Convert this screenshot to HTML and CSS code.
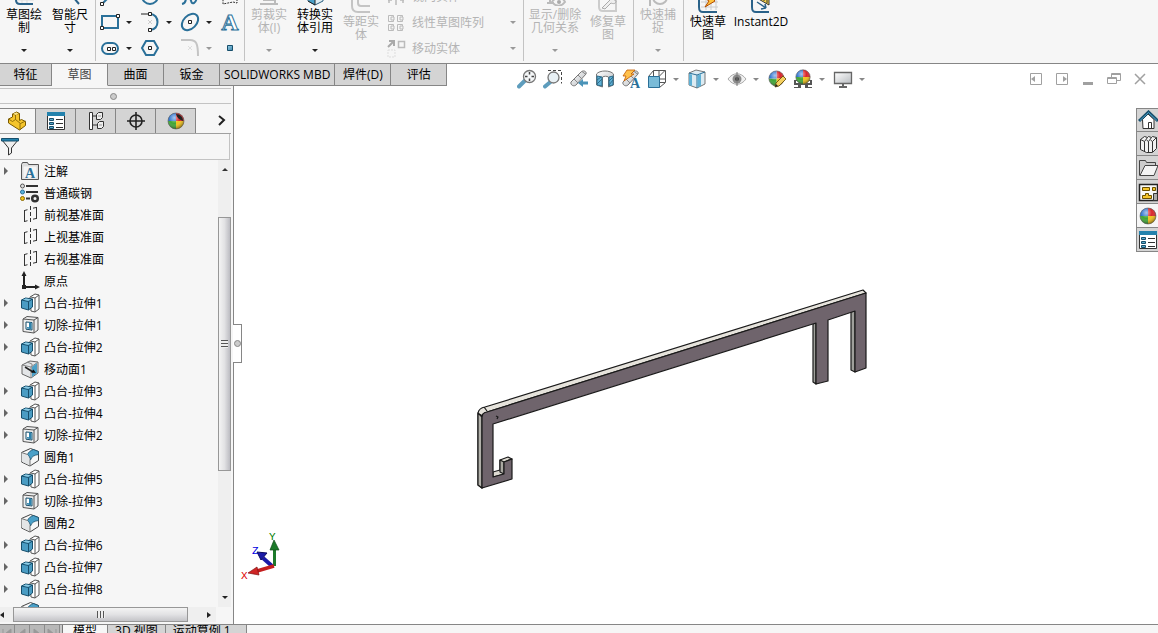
FILE: index.html
```html
<!DOCTYPE html>
<html lang="zh-CN">
<head>
  <meta charset="UTF-8">
  <meta name="viewport" content="width=device-width, initial-scale=1.0">
  <title>SOLIDWORKS</title>
  <link rel="stylesheet" href="styles.css">
</head>
<body>
  <!-- Icon sprite -->
  <svg class="sprite" aria-hidden="true">
    <defs>
      <linearGradient id="gray" x1="0" y1="0" x2="1" y2="1"><stop offset="0" stop-color="#fff"/><stop offset="1" stop-color="#b8bcc0"/></linearGradient>
      <linearGradient id="blue" x1="0" y1="0" x2="1" y2="1"><stop offset="0" stop-color="#9bd0e6"/><stop offset="1" stop-color="#3b86ad"/></linearGradient>
      <radialGradient id="shine" cx=".4" cy=".3" r=".7"><stop offset="0" stop-color="#fff" stop-opacity=".6"/><stop offset=".5" stop-color="#fff" stop-opacity="0"/><stop offset="1" stop-color="#000" stop-opacity=".4"/></radialGradient>
    </defs>
    <symbol id="ball" viewBox="0 0 20 20">
      <path d="M10 10V2a8 8 0 0 1 8 8z" fill="#d9262b"/><path d="M10 10h8a8 8 0 0 1-8 8z" fill="#f2c21b"/><path d="M10 10v8a8 8 0 0 1-8-8z" fill="#3fa535"/><path d="M10 10H2a8 8 0 0 1 8-8z" fill="#2f74d0"/>
      <circle cx="10" cy="10" r="8" fill="url(#shine)" stroke="#555" stroke-width=".6"/>
    </symbol>
    <symbol id="boss" viewBox="0 0 20 20">
      <path d="M10 4l5-3 4 1v14l-4 3-4-1z" fill="#fff" stroke="#555"/><path d="M15 5l4-3M15 5v14M11 4l4 1" fill="none" stroke="#555"/>
      <path d="M1.500 7l4-2 7 1v8l-4 3-7-2z" fill="#4a9cc3" stroke="#174e6b"/><path d="M1.500 7l7 1.500 4-2.500M8.500 8.500V17" fill="none" stroke="#174e6b"/><path d="M3 6.800l3-1.200 5 .800-3 1.300z" fill="#8ccbe4"/>
    </symbol>
    <symbol id="cut" viewBox="0 0 20 20">
      <path d="M3 4l4-2.500 11 1V15l-4 3-11-1.500z" fill="#eee" stroke="#555"/><path d="M3 4l11 1 4-2.500M14 5v13" fill="none" stroke="#555"/>
      <path d="M6 7l6 .500v7.500l-6-.800z" fill="#fff" stroke="#174e6b"/><path d="M9 7.500l2.500.200v6.500L7 13.500V12l2 .200z" fill="#2d83ad"/>
    </symbol>
    <symbol id="moveface" viewBox="0 0 20 20">
      <path d="M2 6l8-4 8 1v11l-7 5-9-4z" fill="#e4e6e8" stroke="#666"/><path d="M2 6l9 2 7-5M11 8v11M7 3l5 2v8" fill="none" stroke="#888"/><path d="M12 8l5-4v10l-5 4z" fill="#4aa0c8"/><path d="M5 8l8 5" stroke="#222" stroke-width="1.500"/><path d="M16 14l-5-.500 2.500-3z" fill="#111"/>
    </symbol>
    <symbol id="fillet" viewBox="0 0 20 20">
      <path d="M1.500 5.500l9-4 8 3v9l-8.500 5.500-8.500-4z" fill="#f6f7f7" stroke="#444"/>
      <path d="M10 18.500v-6c0-2-1-4-2.500-5l-6-2v9z" fill="#e3e5e6"/>
      <path d="M7.500 7.500c1-2.500 3-4 6-5l5 2v3c-4 .500-7 2-8 5.500-.500-2.500-1.500-4.500-3-5.500z" fill="#4aa0c8" stroke="#174e6b" stroke-width=".8"/>
      <path d="M1.500 5.500l6 2M10 12.500V19" fill="none" stroke="#777"/>
    </symbol>
    <symbol id="plane" viewBox="0 0 20 20">
      <path d="M4.500 5v12M16.500 2v12M4.500 5.500l3-.800M13 3.200l3.500-.800M4.500 16.500l3-.800M13 14.200l3.500-.800" fill="none" stroke="#333"/><path d="M10.500 1v18" stroke="#333" stroke-dasharray="4 2"/>
    </symbol>
    <symbol id="notes" viewBox="0 0 20 20">
      <path d="M1.500 18.500v-15l1-2h5l1 2h10v15z" fill="#ddd" stroke="#555"/><path d="M3.500 5.500h13v12h-13z" fill="#f4f4f4"/>
      <text x="10" y="17" class="glyph-a">A</text>
    </symbol>
    <symbol id="material" viewBox="0 0 20 20">
      <circle cx="2.500" cy="3" r="2" fill="#ddd" stroke="#555"/><circle cx="2.500" cy="9" r="2" fill="#59b3d9" stroke="#2a6f97"/><circle cx="2.500" cy="15.500" r="2" fill="#f2c21b" stroke="#8a6a00"/>
      <path d="M6 3h12M6 9h12M6 15.500h4" stroke="#333" stroke-width="2"/><circle cx="15" cy="15.500" r="2.800" fill="none" stroke="#333" stroke-width="2.500"/>
    </symbol>
    <symbol id="origin" viewBox="0 0 20 20">
      <path d="M4 3v13h13" fill="none" stroke="#222" stroke-width="2"/><path d="M4 0l2.500 5h-5zM20 16l-5-2.500v5z" fill="#222"/><path d="M2 14h4v4H2z" fill="#222"/>
    </symbol>
    <symbol id="part" viewBox="0 0 20 20">
      <path d="M1.500 8l4-2V3l4-2 3 1.500v7l2-1 4 2v4l-6 4.500-11-7z" fill="#f5c52c" stroke="#7a5a00"/><path d="M1.500 8l4 2.500 3-2V3.500l4-1M5.500 3l3 1M8.500 8.500l5 4 5-2.500M13 12.500V19" fill="none" stroke="#7a5a00" stroke-width=".8"/><path d="M6 3l3-1.500 2.500 1L9 4z" fill="#fde68a"/>
    </symbol>
    <symbol id="props" viewBox="0 0 20 20">
      <path d="M1.500 2.500h17v16h-17z" fill="#fff" stroke="#333"/><path d="M1 1h18v4H1z" fill="#2382ad"/><path d="M3.500 7.500h4v2h-4zM3.500 11.500h4v2h-4zM3.500 15.500h4v2h-4z" fill="#5aa9cc" stroke="#174e6b"/><path d="M10 8.500h7M10 12.500h7M10 16.500h7" stroke="#333"/>
    </symbol>
    <symbol id="config" viewBox="0 0 20 20">
      <path d="M3.500 1.500h3v17h-3zM7 5h4M7 14h4" fill="#fff" stroke="#333"/><path d="M10.500 3.500l2-2h4v5l-2 2h-4zM11.500 12.500l2-2h4v5l-2 2h-4z" fill="#eee" stroke="#333"/><path d="M12 5h3M13 14h3" stroke="#999"/>
    </symbol>
    <symbol id="target" viewBox="0 0 20 20"><circle cx="10" cy="10" r="6" fill="none" stroke="#222" stroke-width="1.600"/><path d="M10 1v18M1 10h18" stroke="#222" stroke-width="1.600"/></symbol>
    <symbol id="funnel" viewBox="0 0 20 20">
      <path d="M2 3l6.500 8v7l3-2v-5L18 3z" fill="#eee" stroke="#333"/><path d="M1.500 1.500h17v2.500h-17z" fill="#2382ad" stroke="#174e6b"/>
    </symbol>
    <symbol id="scope" viewBox="0 0 20 20">
      <path d="M2 13l10-10c2-2 6-1 5 2L7 16c-2 2-6 0-5-3z" fill="url(#gray)" stroke="#777"/><path d="M9 6l4 4M5 10l4 4M13 2.500l4 3" fill="none" stroke="#888"/>
    </symbol>
    <symbol id="zoomfit" viewBox="0 0 20 20">
      <path d="M2 17.500l6-6" stroke="#5e9dbd" stroke-width="4" stroke-linecap="round"/><circle cx="12.500" cy="7.500" r="6" fill="#f5f7f8" stroke="#777" stroke-width="1.300"/><path d="M12.500 3v2.500M12.500 9.500V12M8 7.500h2.500M14.500 7.500H17" stroke="#444" stroke-width="1.500"/>
    </symbol>
    <symbol id="zoomarea" viewBox="0 0 20 20">
      <path d="M2 17.500l6-5" stroke="#5e9dbd" stroke-width="4" stroke-linecap="round"/><circle cx="10.500" cy="8.500" r="5.500" fill="#e8f0f4" stroke="#777" stroke-width="1.300"/><path d="M5 1.500h13.500v13" fill="none" stroke="#444" stroke-dasharray="3 2"/>
    </symbol>
    <symbol id="section" viewBox="0 0 20 20">
      <path d="M1.500 5c3-4 14-4 17 0v11l-5 2V8c-2-1-4-1-6 0v10l-6-2z" fill="url(#gray)" stroke="#777"/><path d="M2 7l5 1v9l-5-1zM14 8l4-1v9l-4 1z" fill="#5fb0d4" stroke="#2f6d8c"/><path d="M2 11l4-3M2 15l5-5M14 12l4-4M14 16l4-5" stroke="#2f6d8c"/>
    </symbol>
    <symbol id="cubeview" viewBox="0 0 20 20">
      <path d="M1.500 7.500l5-6h12v12l-6 5M12 7.500l6-6M6.500 1.500v6M12 13.500h6M12 1v6M13 10h5" fill="none" stroke="#555"/><path d="M1.500 7.500h11v11h-11z" fill="#79bbd8" stroke="#2a6f97"/>
    </symbol>
    <symbol id="shaded" viewBox="0 0 20 20">
      <path d="M2 4l7-3 9 2v12l-8 4-8-3z" fill="#dcebf2" stroke="#777"/><path d="M2 4l8 2 8-3M10 6v13" fill="none" stroke="#2a6f97"/><path d="M2 5l3 .500V17l-3-1zM10.500 6.500L14 5v12l-3.500 1.500z" fill="#5fb0d4"/>
    </symbol>
    <symbol id="eye" viewBox="0 0 20 20">
      <path d="M1 10c5-7 13-7 18 0-5 7-13 7-18 0z" fill="#f1f1f1" stroke="#aaa"/><circle cx="10" cy="10" r="4.500" fill="#8c8c8c"/><circle cx="10" cy="10" r="2" fill="#444"/><path d="M10 3v14" stroke="#777"/>
    </symbol>
    <symbol id="monitor" viewBox="0 0 20 20"><path d="M1.500 3.500h17v11h-17z" fill="url(#gray)" stroke="#666" stroke-width="1.300"/><path d="M9 15h2v2h3v2H6v-2h3z" fill="#666"/></symbol>
    <symbol id="rect" viewBox="0 0 20 20"><path d="M2 4h16v12H2z" fill="none" stroke="#2a7099" stroke-width="2"/><path d="M.5 14.500h3v3h-3zM16.500 2.500h3v3h-3z" fill="#fff" stroke="#222"/></symbol>
    <symbol id="arc" viewBox="0 0 20 20"><path d="M10 2c10 0 10 16 0 16" fill="none" stroke="#2a7099" stroke-width="2"/><path d="M1 2h8" stroke="#222"/><path d="M8.500.5h3v3h-3zM8.500 16.500h3v3h-3z" fill="#fff" stroke="#222"/><path d="M8 8l4 4M12 8l-4 4" stroke="#ccc"/></symbol>
    <symbol id="ellipse" viewBox="0 0 20 20"><ellipse cx="10" cy="10" rx="9.500" ry="6.500" transform="rotate(-45 10 10)" fill="none" stroke="#2a7099" stroke-width="2"/><path d="M8.500 8.500h3v3h-3z" fill="#fff" stroke="#222"/></symbol>
    <symbol id="lettera" viewBox="0 0 20 20"><text x="10" y="18" class="outline-a">A</text></symbol>
    <symbol id="slot" viewBox="0 0 20 20"><rect x="2" y="5" width="16" height="11" rx="5.500" fill="none" stroke="#2a7099" stroke-width="2"/><path d="M7.500 9.500h3v3h-3zM12.500 9.500h3v3h-3z" fill="#fff" stroke="#222"/></symbol>
    <symbol id="hex" viewBox="0 0 20 20"><path d="M6 3h8l4 7-4 7H6l-4-7z" fill="none" stroke="#2a7099" stroke-width="2"/><path d="M8.500 8.500h3v3h-3z" fill="#fff" stroke="#222"/></symbol>
    <symbol id="corner" viewBox="0 0 20 20"><path d="M1 2h9c6 0 8 3 8 16" fill="none" stroke="#c4c4c4" stroke-width="2"/><path d="M8 8l4 4M12 8l-4 4" stroke="#ddd"/></symbol>
    <symbol id="point" viewBox="0 0 20 20"><path d="M7.500 7.500h5v5h-5z" fill="url(#blue)" stroke="#174e6b"/></symbol>
    <symbol id="line" viewBox="0 0 20 20"><path d="M3 17L19 1" stroke="#2a7099" stroke-width="2"/><path d="M.5 16.500h3v3h-3z" fill="#fff" stroke="#222"/></symbol>
    <symbol id="circle" viewBox="0 0 20 20"><circle cx="10" cy="10" r="8" fill="none" stroke="#2a7099" stroke-width="2"/></symbol>
    <symbol id="spline" viewBox="0 0 20 20"><path d="M2 18c6-1 2-7 6-7s2 8 6 6 2-8 4-12" fill="none" stroke="#2a7099" stroke-width="2"/></symbol>
    <symbol id="lasso" viewBox="0 0 20 20"><path d="M3 3h14v14l-4-1-10 2z" fill="none" stroke="#333" stroke-dasharray="2 1"/></symbol>
    <symbol id="sketch" viewBox="0 0 24 24"><path d="M10 1v20M15 1v20M5 13h17M5 18h17" stroke="#ddd"/><path d="M4 0v18c0 3 1 4 4 4h13" fill="none" stroke="#2a6289" stroke-width="2"/></symbol>
    <symbol id="dimension" viewBox="0 0 24 24"><path d="M4 2l17 20" stroke="#2a6289" stroke-width="2"/></symbol>
    <symbol id="trim" viewBox="0 0 24 24"><path d="M7 2v14h4V2M15 8v8h6M3 22h18M6 18h12v4" fill="none" stroke="#bbb" stroke-width="2"/></symbol>
    <symbol id="convert" viewBox="0 0 24 24"><path d="M5 10h15v9l-8 4-7-4z" fill="#e0edf3" stroke="#2a5f80"/><path d="M5 19l7 4V13" fill="#4aa0c8" stroke="#222"/></symbol>
    <symbol id="offset" viewBox="0 0 24 24"><path d="M3 0v17c0 4 2 6 6 6h12M9 0v14c0 2 1 3 3 3h9" fill="none" stroke="#c4c4c4" stroke-width="2"/></symbol>
    <symbol id="relations" viewBox="0 0 24 24"><path d="M4 21h7M7 12v9M9 20c4-6 10-6 13 0-4 5-9 5-13 0z" fill="none" stroke="#bbb" stroke-width="2"/><circle cx="16" cy="20" r="2" fill="#aaa"/></symbol>
    <symbol id="repair" viewBox="0 0 24 24"><path d="M3 0v18c0 3 1 4 4 4h13V0" fill="none" stroke="#ccc" stroke-width="2"/><path d="M6 19l8-8c0-4 3-5 5-4l-2 3 3 2c0 3-3 3-5 2l-6 6z" fill="#eee" stroke="#aaa"/></symbol>
    <symbol id="snap" viewBox="0 0 24 24"><path d="M4 10v14" stroke="#bbb" stroke-width="2"/><circle cx="14" cy="15" r="7" fill="none" stroke="#bbb" stroke-width="2"/><path d="M14 15l3-4" stroke="#aaa"/></symbol>
    <symbol id="rapid" viewBox="0 0 24 24"><path d="M10 6v15M15 6v15M20 6v15M5 13h17M5 18h17" stroke="#ccc"/><path d="M3 0v18c0 4 1 5 4 5h14" fill="none" stroke="#2a6289" stroke-width="2"/><path d="M14 4l7 3-4 3 2 2-10 6 4-6-3-2z" fill="#ffc33c" stroke="#b34a00"/></symbol>
    <symbol id="instant" viewBox="0 0 24 24"><path d="M3 0v18c0 4 1 5 4 5h13" fill="none" stroke="#2a6289" stroke-width="2"/><path d="M6 8l14 8v-6L6 2z" fill="#f8d54a" stroke="#333"/><path d="M9 6v3M12 8v3M15 9v3M18 11v3" stroke="#333"/><path d="M8 13l9 6m0 0l-1-4m1 4l-5 1" stroke="#2a6289" stroke-width="1.500"/></symbol>
    <symbol id="array" viewBox="0 0 20 20"><path d="M2.500 3.500h5v6h-5zM11.500 3.500h5v6h-5zM2.500 12.500h5v6h-5zM11.500 12.500h5v6h-5z" fill="none" stroke="#bbb"/><path d="M5 5h3v3H5zM14 5h3v3h-3zM5 14h3v3H5zM14 14h3v3h-3z" fill="#f6f6f6" stroke="#bbb"/></symbol>
    <symbol id="mirror" viewBox="0 0 20 20"><path d="M2 14h4M10 2v17M14 14h4M3 12v5M17 12v5" stroke="#bbb" stroke-width="1.500"/></symbol>
    <symbol id="moveent" viewBox="0 0 20 20"><path d="M2 9l5-5M3 3h5v5" fill="none" stroke="#aaa" stroke-width="2"/><path d="M12.500 3.500h6v6h-6z" fill="none" stroke="#bbb" stroke-width="1.500"/><path d="M2 12h7v7H2z" fill="none" stroke="#ddd" stroke-dasharray="2 1"/></symbol>
    <symbol id="home" viewBox="0 0 20 20"><path d="M4.500 9.500L10 4l6 5.500v9h-11z" fill="#fff" stroke="#333"/><path d="M10.500 18.500v-6h3v6" fill="none" stroke="#333"/><path d="M1 11l9.500-9L20 11" fill="none" stroke="#174e6b" stroke-width="3"/><path d="M2 10.500l8.500-8L19 10.500" fill="none" stroke="#4aa0c8"/></symbol>
    <symbol id="library" viewBox="0 0 20 20"><path d="M2.500 5.500l4-3 3 1 1-1 3 1 1-1 4 1v11l-4 4-6 0-6-3z" fill="#f2f2f2" stroke="#333"/><path d="M2.500 5.500l4 2V18M6.500 7.500l3-4M10.500 7.500V18M8.500 6l2 1.500 3-4M14.500 7.500V18M12.500 6l2 1.500 4-4" fill="none" stroke="#333"/></symbol>
    <symbol id="folder" viewBox="0 0 20 20"><path d="M1.500 17.500v-15h6l1 2h9v3" fill="#ccc" stroke="#444"/><path d="M2 17.500l5-10h13l-4 10z" fill="#f4f4f4" stroke="#444"/></symbol>
    <symbol id="palette" viewBox="0 0 20 20"><path d="M1.500 2.500h18v16h-18z" fill="#f8f8f8" stroke="#222" stroke-width="1.500"/><path d="M4.500 5.500h7v3h-7zM14.500 5.500h3v3h-3zM7.500 11.500h3v2h3v3h-9v-3h3z" fill="#f5c52c" stroke="#6b5000"/><path d="M15.500 11.500h4v7h-4z" fill="#aaa" stroke="#333"/></symbol>
  </svg>

  <header class="ribbon">
    <div class="group">
      <button class="tool"><svg><use href="#sketch"/></svg><span>草图绘<br>制</span><i class="caret"></i></button>
      <button class="tool"><svg><use href="#dimension"/></svg><span>智能尺<br>寸</span><i class="caret"></i></button>
    </div>
    <div class="group entities">
      <button aria-label="直线"><svg><use href="#line"/></svg><i class="caret"></i></button>
      <button aria-label="圆"><svg><use href="#circle"/></svg><i class="caret"></i></button>
      <button aria-label="样条曲线"><svg><use href="#spline"/></svg><i class="caret"></i></button>
      <button aria-label="基准面"><svg><use href="#lasso"/></svg></button>
      <button aria-label="矩形"><svg><use href="#rect"/></svg><i class="caret"></i></button>
      <button aria-label="圆弧"><svg><use href="#arc"/></svg><i class="caret"></i></button>
      <button aria-label="椭圆"><svg><use href="#ellipse"/></svg><i class="caret"></i></button>
      <button aria-label="文字"><svg><use href="#lettera"/></svg></button>
      <button aria-label="槽口"><svg><use href="#slot"/></svg><i class="caret"></i></button>
      <button aria-label="多边形"><svg><use href="#hex"/></svg></button>
      <button aria-label="圆角" disabled><svg><use href="#corner"/></svg><i class="caret"></i></button>
      <button aria-label="点"><svg><use href="#point"/></svg></button>
    </div>
    <div class="group">
      <button class="tool" disabled><svg><use href="#trim"/></svg><span>剪裁实<br>体(I)</span><i class="caret"></i></button>
      <button class="tool"><svg><use href="#convert"/></svg><span>转换实<br>体引用</span><i class="caret"></i></button>
      <button class="tool low" disabled><svg><use href="#offset"/></svg><span>等距实<br>体</span></button>
      <div class="rows">
        <button disabled><svg><use href="#mirror"/></svg><span>镜向实体</span></button>
        <button disabled><svg><use href="#array"/></svg><span>线性草图阵列</span><i class="caret"></i></button>
        <button disabled><svg><use href="#moveent"/></svg><span>移动实体</span><i class="caret"></i></button>
      </div>
    </div>
    <div class="group">
      <button class="tool wide" disabled><svg><use href="#relations"/></svg><span>显示/删除<br>几何关系</span><i class="caret"></i></button>
      <button class="tool low" disabled><svg><use href="#repair"/></svg><span>修复草<br>图</span></button>
    </div>
    <div class="group">
      <button class="tool" disabled><svg><use href="#snap"/></svg><span>快速捕<br>捉</span><i class="caret"></i></button>
    </div>
    <div class="group last">
      <button class="tool low"><svg><use href="#rapid"/></svg><span>快速草<br>图</span></button>
      <button class="tool wide low"><svg><use href="#instant"/></svg><span>Instant2D</span></button>
    </div>
  </header>

  <div class="tab-row">
    <nav class="tabs">
      <button>特征</button>
      <button class="active">草图</button>
      <button>曲面</button>
      <button>钣金</button>
      <button>SOLIDWORKS MBD</button>
      <button>焊件(D)</button>
      <button>评估</button>
    </nav>
    <div class="view-tools">
      <button aria-label="整屏显示全图"><svg><use href="#zoomfit"/></svg></button>
      <button aria-label="局部放大"><svg><use href="#zoomarea"/></svg></button>
      <button aria-label="上一视图"><svg viewBox="0 0 20 20"><use href="#scope"/><path d="M9 14l5-4v2.500h5v3h-5V18z" fill="#4a93b8"/></svg></button>
      <button aria-label="剖面视图"><svg><use href="#section"/></svg></button>
      <button aria-label="动态注解视图"><svg viewBox="0 0 20 20"><use href="#scope"/><path d="M6 1h8l-4 4h3L3 12l2-5H2z" fill="#ffc14d" stroke="#c25a00" stroke-width=".8"/><text x="14" y="19" class="glyph-a">A</text></svg></button>
      <button aria-label="视图定向"><svg><use href="#cubeview"/></svg></button>
      <button class="drop" aria-label="更多视图"><i class="caret"></i></button>
      <button aria-label="显示样式"><svg><use href="#shaded"/></svg></button>
      <button class="drop" aria-label="更多样式"><i class="caret"></i></button>
      <button aria-label="隐藏/显示项目"><svg><use href="#eye"/></svg></button>
      <button class="drop" aria-label="更多项目"><i class="caret"></i></button>
      <button aria-label="编辑外观"><svg viewBox="0 0 20 20"><use href="#ball" width="19" height="19"/><path d="M8 18l1-4 7-7 3 3-7 7z" fill="#f5d060" stroke="#5a4300" stroke-width=".8"/><path d="M8 18l1-3 2 2z" fill="#222"/></svg></button>
      <button aria-label="应用布景"><svg viewBox="0 0 20 20"><path d="M1 11h18v8H1z" fill="#555"/><path d="M3 12h3v2H3zM14 12h3v2h-3zM1 16h4v2H1zM8 16h4v3H8zM15 16h4v2h-4z" fill="#fff"/><use href="#ball" x="1" y="-1" width="18" height="18"/></svg></button>
      <button class="drop" aria-label="更多布景"><i class="caret"></i></button>
      <button aria-label="视图设定"><svg><use href="#monitor"/></svg></button>
      <button class="drop" aria-label="更多设定"><i class="caret"></i></button>
    </div>
    <div class="window-tools">
      <button aria-label="左侧窗格"><svg viewBox="0 0 14 14"><path d="M1.500 1.500h11v11h-11z"/><path class="solid" d="M6 4v6L2 7z"/></svg></button>
      <button aria-label="右侧窗格"><svg viewBox="0 0 14 14"><path d="M1.500 1.500h11v11h-11z"/><path class="solid" d="M8 4v6l4-3z"/></svg></button>
      <button aria-label="最小化"><svg viewBox="0 0 14 14"><path class="solid" d="M2 10h10v3H2z"/></svg></button>
      <button aria-label="还原"><svg viewBox="0 0 14 14"><path d="M4.500 5V1.500h9v7H10M.5 5.500h9v6h-9zM4 2.500h9M1 6.500h8"/></svg></button>
      <button aria-label="关闭"><svg viewBox="0 0 14 14"><path d="M2 2l10 10M12 2L2 12" stroke-width="1.500"/></svg></button>
    </div>
  </div>

  <main class="workspace">
    <aside class="panel">
      <div class="grip"><i class="dot"></i></div>
      <nav class="panel-tabs">
        <button class="active" aria-label="设计树"><svg><use href="#part"/></svg></button>
        <button aria-label="属性"><svg><use href="#props"/></svg></button>
        <button aria-label="配置"><svg><use href="#config"/></svg></button>
        <button aria-label="尺寸专家"><svg><use href="#target"/></svg></button>
        <button aria-label="外观"><svg viewBox="0 0 20 20"><use href="#ball"/><path d="M10 3c1 4 4 6 7 7 0-4-3-7-7-7z" fill="#222"/></svg></button>
        <button class="more" aria-label="更多"><svg viewBox="0 0 20 20"><path d="M8 5l5 4-5 5" fill="none" stroke="#222" stroke-width="2"/></svg></button>
      </nav>
      <label class="filter"><svg><use href="#funnel"/></svg><input type="text" aria-label="过滤"></label>
      <div class="tree-area">
        <ul class="tree">
          <li class="parent"><svg><use href="#notes"/></svg>注解</li>
          <li><svg><use href="#material"/></svg>普通碳钢</li>
          <li><svg><use href="#plane"/></svg>前视基准面</li>
          <li><svg><use href="#plane"/></svg>上视基准面</li>
          <li><svg><use href="#plane"/></svg>右视基准面</li>
          <li><svg><use href="#origin"/></svg>原点</li>
          <li class="parent"><svg><use href="#boss"/></svg>凸台-拉伸1</li>
          <li class="parent"><svg><use href="#cut"/></svg>切除-拉伸1</li>
          <li class="parent"><svg><use href="#boss"/></svg>凸台-拉伸2</li>
          <li><svg><use href="#moveface"/></svg>移动面1</li>
          <li class="parent"><svg><use href="#boss"/></svg>凸台-拉伸3</li>
          <li class="parent"><svg><use href="#boss"/></svg>凸台-拉伸4</li>
          <li class="parent"><svg><use href="#cut"/></svg>切除-拉伸2</li>
          <li><svg><use href="#fillet"/></svg>圆角1</li>
          <li class="parent"><svg><use href="#boss"/></svg>凸台-拉伸5</li>
          <li class="parent"><svg><use href="#cut"/></svg>切除-拉伸3</li>
          <li><svg><use href="#fillet"/></svg>圆角2</li>
          <li class="parent"><svg><use href="#boss"/></svg>凸台-拉伸6</li>
          <li class="parent"><svg><use href="#boss"/></svg>凸台-拉伸7</li>
          <li class="parent"><svg><use href="#boss"/></svg>凸台-拉伸8</li>
          <li><svg><use href="#fillet"/></svg></li>
        </ul>
        <div class="scroll-v"><i class="caret up"></i><div class="thumb"></div><i class="caret"></i></div>
      </div>
      <div class="scroll-h"><i class="caret left"></i><div class="thumb"></div><i class="caret right"></i></div>
      <button class="splitter" aria-label="折叠面板"><i class="dot"></i></button>
    </aside>

    <section class="canvas">
      <svg viewBox="234 86 924 538" preserveAspectRatio="xMidYMid meet">
        <!-- part -->
        <g stroke="#1a1a1a" stroke-width="1.200" stroke-linejoin="round">
          <path d="M478 413Q479 408 485 407L863 290L866 293L487 412Q482 413 482 417V488L478 485z" fill="#e6e3dc"/>
          <path d="M478 413V485L482 488V417z" fill="#b2b1aa"/>
          <path d="M813 324V382L816 384V323zM851 312V370L855 372V311z" fill="#9fa09b"/>
          <path d="M493 472L500 470V460L508 457L512 459L504 462V474L493 477z" fill="#dedbd2"/>
          <path d="M500 460L504 462V474L500 472z" fill="#aaa9a2"/>
          <path d="M487 412L866 293V368L855 372V311L828 320V381L816 384V323L493 424V477L504 474V462L512 459V479L482 488V417Q482 413 487 412z" fill="#6f646c"/>
          <path d="M479 414L483 416M484 407L487 411" fill="none"/>
          <path d="M496 416l2 1-1 2" fill="none"/>
        </g>
        <!-- axis triad -->
        <g class="triad">
          <path d="M273 566V550h3v16z" fill="#1c7a2a"/><path d="M270 550l4-10 5 10z" fill="#1c7a2a" stroke="#0f4a18" stroke-width=".7"/>
          <path d="M272 566l-9-8" stroke="#1a1aa8" stroke-width="4"/><path d="M257 552l10 1-6 7z" fill="#1a1aa8" stroke="#0b0b60"/>
          <path d="M274 566l-17 5" stroke="#c41e1e" stroke-width="3.500"/><path d="M248 573l9-6 2 8z" fill="#d02525" stroke="#801010" stroke-width=".7"/>
          <text x="269" y="540" fill="#008000">Y</text>
          <text x="252" y="554" fill="#0000e0">Z</text>
          <text x="241" y="579" fill="#e00000">X</text>
        </g>
      </svg>
      <nav class="task-pane">
        <button aria-label="资源"><svg><use href="#home"/></svg></button>
        <button aria-label="设计库"><svg><use href="#library"/></svg></button>
        <button aria-label="文件探索器"><svg><use href="#folder"/></svg></button>
        <button aria-label="视图调色板"><svg><use href="#palette"/></svg></button>
        <button class="active" aria-label="外观"><svg><use href="#ball"/></svg></button>
        <button aria-label="自定义属性"><svg><use href="#props"/></svg></button>
      </nav>
    </section>
  </main>

  <footer class="sheet-bar">
    <div class="sheet-nav">
      <button aria-label="第一个"><svg viewBox="0 0 14 14"><path d="M3 2v10M11 2v10L5 7z"/></svg></button>
      <button aria-label="上一个"><svg viewBox="0 0 14 14"><path d="M10 2v10L4 7z"/></svg></button>
      <button aria-label="下一个"><svg viewBox="0 0 14 14"><path d="M4 2v10l6-5z"/></svg></button>
      <button aria-label="最后一个"><svg viewBox="0 0 14 14"><path d="M3 2v10l6-5zM11 2v10"/></svg></button>
    </div>
    <button class="sheet active">模型</button>
    <button class="sheet">3D 视图</button>
    <button class="sheet">运动算例 1</button>
  </footer>
</body>
</html>
```

FILE: styles.css
```css
* {
  box-sizing: border-box;
}

body {
  margin: 0;
  height: 100vh;
  display: flex;
  flex-direction: column;
  overflow: hidden;
  background: #fff;
  color: #000;
  font-family: "Open Sans", "Noto Sans CJK SC", sans-serif;
  font-size: 12px;
  line-height: 13px;
}

button {
  margin: 0;
  padding: 0;
  border: none;
  background: none;
  color: inherit;
  font: inherit;
}

button:disabled {
  color: #b4b4b4;
}

svg {
  display: block;
  flex: none;
  width: 20px;
  height: 20px;
}

.sprite {
  position: absolute;
  width: 0;
  height: 0;
}

.glyph-a {
  font: bold 14px "Liberation Serif", serif;
  fill: #2a7099;
  text-anchor: middle;
}

.outline-a {
  font: bold 24px "Liberation Serif", serif;
  fill: #fff;
  stroke: #2a7099;
  text-anchor: middle;
}

/* Small triangles */
.caret {
  flex: none;
  width: 0;
  height: 0;
  border: 3px solid transparent;
  border-top-color: #222;
  border-bottom: none;
}

button:disabled .caret {
  border-top-color: #999;
}

.caret.up {
  border-top: none;
  border-bottom: 3px solid #333;
}

.caret.left {
  border: 3px solid transparent;
  border-right: 4px solid #222;
  border-left: none;
}

.caret.right {
  border: 3px solid transparent;
  border-left: 4px solid #222;
  border-right: none;
}

/* Ribbon: its top runs out of the window */
.ribbon {
  flex: none;
  display: flex;
  align-items: flex-end;
  height: 64px;
  padding-bottom: 2px;
  overflow: hidden;
  background: #f6f6f6;
  border-bottom: 1px solid #868686;
}

.group {
  flex: none;
  display: flex;
  height: 88px;
  padding: 0 2px 0 1px;
  border-right: 1px solid #c3c3c3;
}

.group.last {
  border-right: none;
}

.tool {
  display: flex;
  flex-direction: column;
  align-items: center;
  width: 46px;
  padding: 9px 0;
  text-align: center;
  white-space: nowrap;
}

.tool svg {
  width: 24px;
  height: 24px;
  margin-bottom: 2px;
}

.tool .caret {
  margin-top: auto;
}

.tool.low {
  padding-top: 16px;
}

.tool.wide {
  width: 60px;
}

.entities {
  display: grid;
  grid-template-columns: repeat(3, 40px) 20px;
  grid-auto-rows: 26px;
  align-content: end;
  padding: 0 4px;
}

.entities button {
  display: flex;
  align-items: center;
  gap: 6px;
}

.rows {
  display: flex;
  flex-direction: column;
  justify-content: flex-end;
  width: 137px;
  padding: 0 5px 0 2px;
}

.rows button {
  display: flex;
  align-items: center;
  gap: 6px;
  height: 26px;
}

.rows .caret {
  margin-left: auto;
}

/* Command tabs and view tools */
.tab-row {
  position: relative;
  z-index: 1;
  flex: none;
  display: flex;
  height: 22px;
}

.tabs {
  display: flex;
}

.tabs button {
  min-width: 56px;
  padding: 0 4px;
  background: #d4d4d4;
  border-right: 1px solid #868686;
  border-bottom: 1px solid #868686;
}

.tabs button:first-child {
  min-width: 52px;
}

.tabs .active {
  color: #444;
  background: #f6f6f6;
  border-bottom-color: #f6f6f6;
}

.view-tools {
  display: flex;
  gap: 6px;
  height: 20px;
  margin: 5px auto 0 70px;
}

.view-tools .drop {
  display: flex;
  align-items: center;
  width: 8px;
}

.view-tools .caret {
  border-top-color: #888;
}

.window-tools {
  display: flex;
  padding: 8px 5px 0 0;
}

.window-tools button {
  display: flex;
  justify-content: center;
  width: 26px;
}

.window-tools svg {
  width: 14px;
  height: 14px;
  fill: none;
  stroke: #a0a0a0;
}

.window-tools .solid {
  fill: #a0a0a0;
  stroke: none;
}

.workspace {
  flex: 1;
  min-height: 0;
  display: flex;
}

/* Feature manager */
.panel {
  position: relative;
  z-index: 1;
  flex: none;
  display: flex;
  flex-direction: column;
  width: 234px;
  padding: 2px 2px 2px 0;
  background: #f6f6f6;
  border-right: 1px solid #868686;
}

.grip {
  display: flex;
  align-items: center;
  justify-content: center;
  height: 16px;
  margin-bottom: 4px;
  padding-right: 5px;
  border: solid #c3c3c3;
  border-width: 1px 0;
}

.dot {
  flex: none;
  width: 7px;
  height: 7px;
  background: #ccc;
  border: 1px solid #888;
  border-radius: 50%;
}

.panel-tabs {
  display: flex;
  height: 26px;
  border-bottom: 1px solid #a0a0a0;
}

.panel-tabs button {
  display: flex;
  align-items: center;
  justify-content: center;
  width: 40px;
  background: #d4d4d4;
  border: solid #868686;
  border-width: 1px 1px 0 0;
}

.panel-tabs .active {
  width: 36px;
  padding-right: 2px;
  background: #f6f6f6;
}

.panel-tabs .more {
  margin-left: auto;
  width: 20px;
  background: none;
  border: none;
}

.filter {
  display: flex;
  align-items: center;
  height: 26px;
  margin-right: 1px;
  border: solid #c3c3c3;
  border-width: 0 1px 1px 0;
}

.filter input {
  flex: 1;
  min-width: 0;
  border: none;
  outline: none;
  background: none;
  font: inherit;
}

.tree-area {
  flex: 1;
  min-height: 0;
  display: flex;
}

.tree {
  flex: 1;
  margin: 0;
  padding: 0;
  overflow: hidden;
  list-style: none;
}

.tree li {
  display: flex;
  align-items: center;
  gap: 4px;
  height: 22px;
  padding-left: 20px;
}

.tree .parent {
  padding-left: 4px;
}

.tree .parent::before {
  content: "";
  width: 0;
  margin-right: 8px;
  border: 4px solid transparent;
  border-left-color: #666;
  border-right: none;
}

.scroll-v {
  display: flex;
  flex-direction: column;
  align-items: center;
  width: 13px;
  padding: 8px 0;
  background: #efefef;
}

.thumb {
  display: flex;
  align-items: center;
  justify-content: center;
  border: 1px solid #979797;
}

.thumb::after {
  content: "";
}

.scroll-v .thumb {
  width: 13px;
  height: 59%;
  margin: 46px 0 auto;
  background: linear-gradient(to right, #f4f4f4, #e2e2e4 50%, #bcbcc2);
}

.scroll-v .thumb::after {
  width: 7px;
  height: 8px;
  background: repeating-linear-gradient(#555 0 1px, #eee 1px 3px);
}

.scroll-h {
  display: flex;
  align-items: center;
  height: 15px;
  margin-right: 15px;
  background: #efefef;
}

.scroll-h .thumb {
  flex: 1;
  height: 15px;
  margin: 0 19px 0 9px;
  background: linear-gradient(#f4f4f4, #e2e2e4 50%, #c4c4c8);
}

.scroll-h .thumb::after {
  width: 8px;
  height: 7px;
  background: repeating-linear-gradient(to right, #555 0 1px, #eee 1px 3px);
}

.scroll-h .right {
  margin-right: 5px;
}

.splitter {
  position: absolute;
  top: 238px;
  left: 100%;
  display: flex;
  align-items: center;
  justify-content: center;
  width: 9px;
  height: 39px;
  background: #fff;
  border: 1px solid #868686;
  border-left: none;
}

/* Graphics area */
.canvas {
  position: relative;
  flex: 1;
  min-width: 0;
  background: #fff;
}

.canvas > svg {
  width: 100%;
  height: 100%;
}

.triad text {
  font: 11px "Liberation Mono", monospace;
}

.task-pane {
  position: absolute;
  top: 22px;
  right: 0;
  display: flex;
  flex-direction: column;
  width: 22px;
  border: solid #868686;
  border-width: 1px 0 0 1px;
}

.task-pane button {
  height: 24px;
  padding: 1px;
  background: #d4d4d4;
  border-bottom: 1px solid #868686;
}

.task-pane button:first-child {
  height: 23px;
}

.task-pane .active {
  background: #f6f6f6;
}

/* Sheet tabs, cut off by the window's lower edge */
.sheet-bar {
  flex: none;
  display: flex;
  align-items: flex-start;
  height: 9px;
  overflow: hidden;
  background: #f6f6f6;
  border-top: 1px solid #868686;
}

.sheet-nav {
  display: flex;
  height: 18px;
  padding-right: 2px;
  background: #c8c8c8;
  border-right: 1px solid #777;
}

.sheet-nav button {
  width: 15px;
  background: #b8b8b8;
  border-right: 1px solid #8c8c8c;
}

.sheet-nav svg {
  width: 14px;
  height: 14px;
  fill: #999;
  stroke: #999;
}

.sheet {
  display: flex;
  height: 18px;
  padding: 0 7px;
  line-height: 12px;
  background: #d4d4d4;
  border-right: 1px solid #868686;
}

.sheet.active {
  padding: 0 10px;
  background: #f6f6f6;
}

.sheet:last-child {
  padding-right: 15px;
}
```
